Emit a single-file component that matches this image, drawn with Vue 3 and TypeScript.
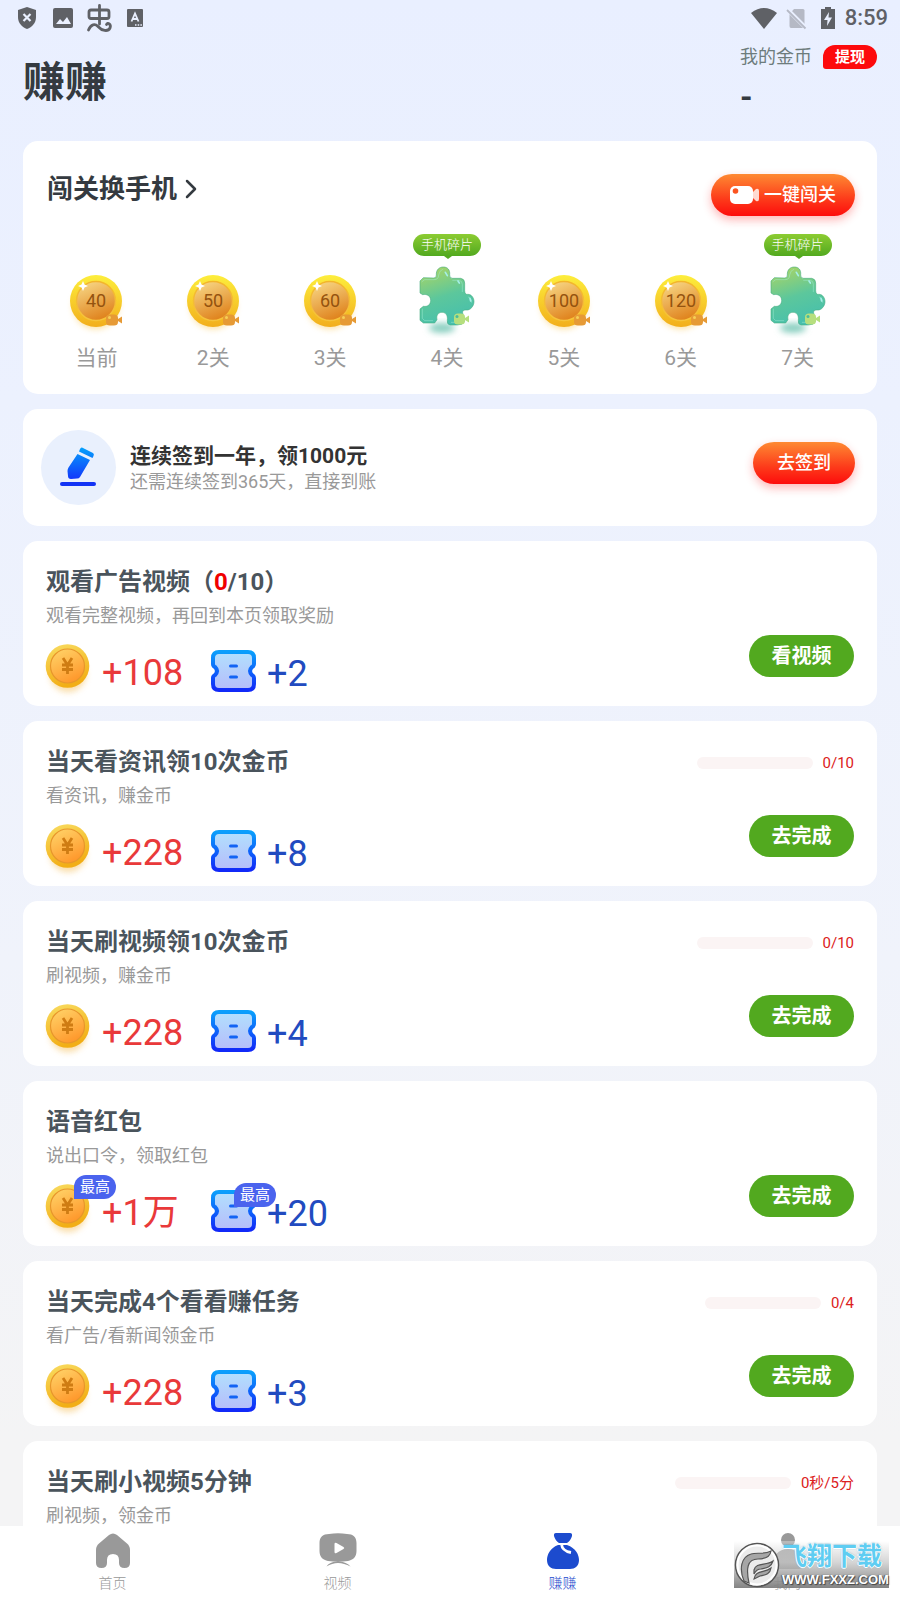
<script setup lang="ts">
interface Step {
  label: string
  coins?: number
}

interface Reward {
  kind: 'coin' | 'ticket'
  amount: string
  capped?: boolean
}

interface Task {
  title: string
  counter?: { done: string; total: string }
  note: string
  rewards: Reward[]
  progress?: string
  percent?: number
  action?: string
}

interface Tab {
  id: string
  label: string
}

const steps: Step[] = [
  { label: '当前', coins: 40 },
  { label: '2关', coins: 50 },
  { label: '3关', coins: 60 },
  { label: '4关' },
  { label: '5关', coins: 100 },
  { label: '6关', coins: 120 },
  { label: '7关' },
]

const rewards = (coin: string, ticket: string, capped = false): Reward[] => [
  { kind: 'coin', amount: coin, capped },
  { kind: 'ticket', amount: ticket, capped },
]

const tasks: Task[] = [
  { title: '观看广告视频', counter: { done: '0', total: '10' }, note: '观看完整视频，再回到本页领取奖励', rewards: rewards('+108', '+2'), action: '看视频' },
  { title: '当天看资讯领10次金币', note: '看资讯，赚金币', rewards: rewards('+228', '+8'), progress: '0/10', percent: 0, action: '去完成' },
  { title: '当天刷视频领10次金币', note: '刷视频，赚金币', rewards: rewards('+228', '+4'), progress: '0/10', percent: 0, action: '去完成' },
  { title: '语音红包', note: '说出口令，领取红包', rewards: rewards('+1万', '+20', true), action: '去完成' },
  { title: '当天完成4个看看赚任务', note: '看广告/看新闻领金币', rewards: rewards('+228', '+3'), progress: '0/4', percent: 0, action: '去完成' },
  { title: '当天刷小视频5分钟', note: '刷视频，领金币', rewards: [], progress: '0秒/5分', percent: 0 },
]

const tabs: Tab[] = [
  { id: 'home', label: '首页' },
  { id: 'video', label: '视频' },
  { id: 'earn', label: '赚赚' },
  { id: 'mine', label: '我的' },
]
</script>

<template>
  <div class="app">
    <svg class="defs" width="0" height="0" aria-hidden="true">
      <defs>
        <linearGradient id="rim" x1="0" y1="0" x2="0" y2="1"><stop offset="0" stop-color="#fdee3c" /><stop offset="1" stop-color="#f2ae1c" /></linearGradient>
        <linearGradient id="face" x1="0.2" y1="0" x2="0.6" y2="1"><stop offset="0" stop-color="#f7d786" /><stop offset="1" stop-color="#df811b" /></linearGradient>
        <linearGradient id="edge" x1="0" y1="0" x2="0" y2="1"><stop offset="0" stop-color="#f3b52b" /><stop offset="1" stop-color="#f6c43c" /></linearGradient>
        <linearGradient id="piece" x1="0.3" y1="0" x2="0.6" y2="1"><stop offset="0" stop-color="#a5d468" /><stop offset="0.5" stop-color="#5cc79c" /><stop offset="1" stop-color="#45bfae" /></linearGradient>
        <linearGradient id="pen" x1="0" y1="0" x2="0" y2="1"><stop offset="0" stop-color="#06a1fb" /><stop offset="1" stop-color="#1238fb" /></linearGradient>
        <linearGradient id="goldRim" x1="0" y1="0" x2="0.3" y2="1"><stop offset="0" stop-color="#f9dd62" /><stop offset="1" stop-color="#f2ae15" /></linearGradient>
        <linearGradient id="goldFace" x1="0" y1="0" x2="0.5" y2="1"><stop offset="0" stop-color="#ffd66b" /><stop offset="1" stop-color="#ff9a2e" /></linearGradient>
        <linearGradient id="ticketLine" x1="0" y1="0" x2="0" y2="1"><stop offset="0" stop-color="#0a9ffc" /><stop offset="1" stop-color="#1129f8" /></linearGradient>
        <linearGradient id="ticketFill" x1="0" y1="0" x2="0" y2="1"><stop offset="0" stop-color="#b1e0fe" /><stop offset="1" stop-color="#b6bcfa" /></linearGradient>
        <filter id="soft" x="-50%" y="-50%" width="200%" height="200%"><feGaussianBlur stdDeviation="3" /></filter>
      </defs>
    </svg>

    <div class="status">
      <div class="status-side">
        <svg width="20" height="22" viewBox="0 0 20 22"><path d="M10 0 19 3V10C19 16 15 20 10 22 5 20 1 16 1 10V3Z" fill="#5f6166" /><path d="m6.500 7 7 7m0-7-7 7" stroke="#eaf0ff" stroke-width="2.200" /></svg>
        <svg width="20" height="20" viewBox="0 0 20 20"><rect width="20" height="20" rx="2" fill="#5f6166" /><path d="m3 16 4-5 3 3 4-5 4 7Z" fill="#eaf0ff" /></svg>
        <svg class="status-bug" width="26" height="28" viewBox="0 0 26 28" fill="none" stroke="#5f6166" stroke-width="2.800" stroke-linecap="round"><path d="M12.500 1.500V20M4 6H20Q22 6 22 8V12.500Q22 14.500 20 14.500H4Q2 14.500 2 12.500V8Q2 6 4 6ZM1.500 26C4 20 8 19.500 11 22.500 15 27 21 28 23 24 24.500 20 20.500 18 19.500 20.500" /></svg>
        <svg width="16" height="18" viewBox="0 0 16 18"><rect width="16" height="18" rx="1" fill="#5f6166" /><path d="M4.500 12.500 8 4.500 11.500 12.500M6 10H10" fill="none" stroke="#eaf0ff" stroke-width="1.800" /><path d="M8 16H15" stroke="#eaf0ff" stroke-width="1.500" stroke-dasharray="1.500 1.200" /></svg>
      </div>
      <div class="status-side status-right">
        <svg width="26" height="21" viewBox="0 0 26 21"><path d="M0 5Q13-5 26 5L13 21Z" fill="#5f6166" /></svg>
        <svg class="status-sim" width="20" height="21" viewBox="0 0 20 21"><path d="M7 1H16Q17.500 1 17.500 2.500V20H4Q2.500 20 2.500 18V6Z" fill="#b5b9c5" /><path d="m0 1 19 19" stroke="#eaf0ff" stroke-width="4" /><path d="m0 2 18.500 18.500" stroke="#b5b9c5" stroke-width="1.800" /></svg>
        <svg width="14" height="22" viewBox="0 0 14 22"><path d="M4 0H10V2H14V22H0V2H4Z" fill="#5f6166" /><path d="M8 5 3 13H6.500L6 19 11 10.500H7.500Z" fill="#eaf0ff" /></svg>
        <span class="clock">8:59</span>
      </div>
    </div>

    <main class="scroll">
      <header class="top">
        <h1>赚赚</h1>
        <div class="wallet">
          <div class="wallet-row">
            <span class="wallet-label">我的金币</span>
            <button type="button" class="withdraw">提现</button>
          </div>
          <strong class="balance">-</strong>
        </div>
      </header>

      <section class="card stages">
        <div class="stages-head">
          <a href="#stages" class="stages-title">
            闯关换手机
            <svg width="12" height="20" viewBox="0 0 12 20"><path d="m2 2 8 8-8 8" fill="none" stroke="#343a40" stroke-width="2.500" stroke-linecap="round" stroke-linejoin="round" /></svg>
          </a>
          <button type="button" class="hot">
            <svg width="30" height="18" viewBox="0 0 30 18"><rect width="23" height="18" rx="5" fill="#fff" /><circle cx="5.500" cy="5" r="2.800" fill="#fb5420" /><path d="M23 6 26 3Q29 2 29 5V13Q29 16 26 15L23 12Z" fill="#fff" opacity=".8" /></svg>
            一键闯关
          </button>
        </div>
        <ol class="steps">
          <li v-for="step in steps" :key="step.label" class="step">
            <div class="tag-slot"><span v-if="!step.coins" class="tag">手机碎片</span></div>
            <svg v-if="step.coins" width="60" height="70" viewBox="-3 -1 60 70">
              <circle cx="27" cy="38" r="23" fill="#fbd57c" opacity=".7" filter="url(#soft)" />
              <circle cx="27" cy="33" r="26" fill="url(#rim)" />
              <circle cx="27" cy="33" r="19.500" fill="url(#face)" stroke="url(#edge)" stroke-width="1.500" />
              <path d="m14 13 1.500 3.500L19 18l-3.500 1.500L14 23l-1.500-3.500L9 18l3.500-1.500Z" fill="#fff" />
              <path d="M37 50Q37 46.500 41 46.500H45Q49 46.500 49 50V51L53 48.500V55.500L49 53V54Q49 57.500 45 57.500H41Q37 57.500 37 54Z" fill="#e69a35" />
              <circle cx="40.500" cy="49.500" r="1.500" fill="#f6cf56" />
              <text x="27" y="39" text-anchor="middle" class="coin-value">{{ step.coins }}</text>
            </svg>
            <svg v-else width="60" height="70" viewBox="-3 0 60 70">
              <ellipse cx="22" cy="61" rx="13" ry="5" fill="#89cfc0" filter="url(#soft)" />
              <g transform="scale(.3333)">
                <path d="M0 42 10 32 40 33Q50 34 49 24C48 8 58 0 70 0S91 8 89 24Q88 34 98 34H122Q134 36 134 48V70Q134 84 144 82C154 82 162 92 162 104S152 131 138 129Q124 128 129 142L133 164Q128 174 112 174H90Q80 172 82 160C84 144 76 136 66 136S48 144 51 158L44 168H10L0 160V126L10 118C24 120 32 112 32 100S22 80 8 83L0 78Z" fill="url(#piece)" stroke="#46ad82" stroke-opacity=".6" stroke-width="3" />
                <path d="M6 44 14 38H42Q56 38 56 24 58 10 68 7M98 40H118Q127 42 127 52V74M145 90Q156 94 155 106M7 126V154L14 161H38M94 166H112" fill="none" stroke="#9eebd0" stroke-width="3" stroke-linecap="round" opacity=".5" />
                <path d="m76 16 6 10m36 22-4-6m36 52 2 8" stroke="#a4efe8" stroke-width="5" stroke-linecap="round" />
              </g>
              <path d="M34 50Q34 46.500 38 46.500H41Q45 46.500 45 50V51L49 48.500V55.500L45 53V54Q45 57.500 41 57.500H38Q34 57.500 34 54Z" fill="#b6df7e" />
              <circle cx="37" cy="49.500" r="1.500" fill="#48bba0" />
            </svg>
            <span class="step-label">{{ step.label }}</span>
          </li>
        </ol>
      </section>

      <section class="card signin">
        <div class="signin-icon">
          <svg width="38" height="42" viewBox="1 0 38 42"><path d="M23 .500 34 6Q35.500 7 34.500 9L33.500 11 20 4.500 21 2Q22 0 23 .500ZM18.500 7 31 13 21 30Q20 31.500 18 31.500L12 32Q9 32 9 29L8.500 24Q8.500 22 9.500 20.500Z" fill="url(#pen)" /><rect x="1" y="35" width="36" height="4" rx="2" fill="#1233f5" /></svg>
        </div>
        <div class="signin-text">
          <h2>连续签到一年，领1000元</h2>
          <p>还需连续签到365天，直接到账</p>
        </div>
        <button type="button" class="hot">去签到</button>
      </section>

      <section v-for="task in tasks" :key="task.title" class="card task">
        <div class="task-main">
          <h2>{{ task.title }}<template v-if="task.counter">（<em>{{ task.counter.done }}</em>/{{ task.counter.total }}）</template></h2>
          <p>{{ task.note }}</p>
          <div v-if="task.rewards.length" class="rewards">
            <div v-for="reward in task.rewards" :key="reward.kind" class="reward" :class="reward.kind">
              <div class="reward-icon">
                <svg v-if="reward.kind === 'coin'" width="44" height="56" viewBox="0 0 44 56">
                  <circle cx="22" cy="30" r="18" fill="#f8cf83" opacity=".7" filter="url(#soft)" />
                  <circle cx="21.500" cy="22" r="21.800" fill="url(#goldRim)" />
                  <circle cx="21.500" cy="22" r="17" fill="url(#goldFace)" stroke="#e8962c" stroke-width="1.200" />
                  <path d="m17 14 4.500 7 4.500-7M21.500 21V30M16 21H27M16 25.500H27" fill="none" stroke="#cf7c13" stroke-width="2.800" />
                </svg>
                <svg v-else width="45" height="42" viewBox="0 0 45 42">
                  <path d="M8 2H37Q43 2 43 8V14Q43 16 41 17 37 21 41 25 43 26 43 28V34Q43 40 37 40H8Q2 40 2 34V28Q2 26 4 25 8 21 4 17 2 16 2 14V8Q2 2 8 2Z" fill="url(#ticketFill)" stroke="url(#ticketLine)" stroke-width="4" />
                  <path d="M19.500 16H25.500M19.500 27H25.500" stroke="#1263f4" stroke-width="3" stroke-linecap="round" />
                </svg>
                <span v-if="reward.capped" class="cap">最高</span>
              </div>
              <span class="amount">{{ reward.amount }}</span>
            </div>
          </div>
        </div>
        <div class="task-side">
          <div v-if="task.progress" class="progress">
            <span class="bar"><span class="bar-fill" :style="{ width: task.percent + '%' }"></span></span>
            <span class="progress-text">{{ task.progress }}</span>
          </div>
          <button v-if="task.action" type="button" class="go">{{ task.action }}</button>
        </div>
      </section>
    </main>

    <nav class="tabs">
      <a v-for="tab in tabs" :key="tab.id" :href="'#' + tab.id" class="tab" :class="{ active: tab.id === 'earn' }">
        <svg width="38" height="36" viewBox="0 0 38 36" fill="currentColor">
          <path v-if="tab.id === 'home'" d="M15 2Q19-1 23 2L33 10.500Q36 13 36 17V30Q36 35 30.500 35T25 30V27Q25 21 19 21T13 27V30Q13 35 7.500 35T2 30V17Q2 13 5 10.500Z" />
          <template v-else-if="tab.id === 'video'">
            <path d="M10 1Q19-.500 28 1C34 1 37.500 4 37.500 10V18C37.500 24 34 27 29 28Q19 29 9 28C4 27 .500 24 .500 18V10C.500 4 4 1 10 1Z" />
            <path d="M7.500 33.500Q10 29 19 28 28 29 31.500 33.500 25 30 19 30T7.500 33.500Z" />
            <path d="M15.500 11Q15.500 9 17.500 10L24.500 14Q26 15 24.500 16L17.500 20Q15.500 21 15.500 19Z" fill="#fff" />
          </template>
          <template v-else-if="tab.id === 'earn'">
            <path d="M12 0H26Q28.500 0 28 3 26.500 8 23 10H15Q11.500 8 10 3 9.500 0 12 0ZM14 12H23C32 15 35 22 35 27 35 33 31 36 26 36H12C7 36 3 33 3 27 3 22 6 15 14 12Z" />
            <path d="M17.500 11Q18 18 27 19.500" fill="none" stroke="#fff" stroke-width="2.800" />
          </template>
          <template v-else>
            <circle cx="19" cy="7" r="7" />
            <path d="M19 16C29 16 34 23 34 31Q34 36 29 36H9Q4 36 4 31C4 23 9 16 19 16Z" />
          </template>
        </svg>
        <span>{{ tab.label }}</span>
      </a>
    </nav>

    <div class="stamp">
      <svg width="46" height="46" viewBox="0 0 46 46">
        <circle cx="23" cy="23" r="21.500" fill="#ececec" stroke="#555" stroke-width="1.500" />
        <circle cx="23" cy="23" r="19.500" fill="none" stroke="#fff" stroke-width="2" />
        <path d="M10 39C5 27 7 15 17 12 23 10 30 13 37 9 36 16 30 17 24 17 13 17 12 27 15 41ZM20 28C22 20 32 24 39 19 37 26 31 26 27 27 23 27 21 30 20 32ZM20 37C21 28 31 31 37 26 36 33 30 33 26 34Z" fill="#a6a6a6" stroke="#555" stroke-width="1.200" />
      </svg>
      <div class="stamp-text">
        <span class="stamp-name">飞翔下载</span>
        <span class="stamp-url">WWW.FXXZ.COM</span>
      </div>
    </div>
  </div>
</template>

<style>
body {
  margin: 0;
}
</style>

<style scoped>
.app {
  position: relative;
  display: flex;
  flex-direction: column;
  height: 100vh;
  overflow: hidden;
  background: linear-gradient(#e9efff 0%, #ecf1fe 25%, #f0f3fb 60%, #f4f4f5 90%);
  font-family: Roboto, "Noto Sans CJK SC", sans-serif;
  color: #343a40;
}
.app * {
  box-sizing: border-box;
}
.defs {
  position: absolute;
}
svg {
  display: block;
  flex: none;
  overflow: visible;
}
h1,
h2,
p,
ol {
  margin: 0;
  padding: 0;
}
button {
  border: 0;
  padding: 0;
  font-family: inherit;
  color: #fff;
  cursor: pointer;
}
a {
  color: inherit;
  text-decoration: none;
}

.status {
  display: flex;
  justify-content: space-between;
  flex: none;
  height: 36px;
  padding: 0 12px 0 17px;
}
.status-side {
  display: flex;
  align-items: center;
  gap: 16px;
}
.status-bug {
  margin-right: -2px;
  margin-left: -2px;
}
.status-right {
  gap: 10px;
}
.status-sim {
  margin-right: 4px;
}
.clock {
  color: #5f6166;
  font-size: 22px;
  font-weight: 500;
  line-height: 38px;
}

.scroll {
  flex: 1;
  min-height: 0;
  display: flex;
  flex-direction: column;
  gap: 15px;
  padding: 0 23px;
  overflow-y: auto;
  scrollbar-width: none;
}
.top {
  display: flex;
  flex: none;
  justify-content: space-between;
  height: 90px;
}
h1 {
  padding-top: 17px;
  font-size: 42px;
  font-weight: 700;
  line-height: 60px;
}
.wallet {
  padding-top: 8px;
}
.wallet-row {
  display: flex;
  align-items: center;
  gap: 11px;
}
.wallet-label {
  color: #6d7c7c;
  font-size: 18px;
  line-height: 26px;
}
.withdraw {
  width: 54px;
  height: 24px;
  border-radius: 12px 12px 12px 3px;
  background: #fd0a0c;
  font-size: 15px;
  font-weight: 700;
  line-height: 24px;
}
.balance {
  display: block;
  font-size: 32px;
  line-height: 54px;
}

.card {
  flex: none;
  border-radius: 15px;
  background: #fff;
}
.stages {
  padding: 33px 21px 21px 15px;
}
.stages-head {
  display: flex;
  justify-content: space-between;
  align-items: flex-start;
  padding: 0 1px 0 9px;
}
.stages-title {
  display: flex;
  align-items: center;
  gap: 8px;
  font-size: 26px;
  font-weight: 700;
  line-height: 30px;
}
.hot {
  display: flex;
  align-items: center;
  gap: 4px;
  height: 42px;
  padding: 0 19px;
  border-radius: 21px;
  background: linear-gradient(#fe8a32, #fd3a1a 60%, #fd0c0c);
  box-shadow: 0 4px 10px rgba(253, 20, 20, 0.3);
  font-size: 18px;
  font-weight: 500;
  line-height: 42px;
}
.steps {
  display: grid;
  grid-template-columns: repeat(7, 1fr);
  margin-top: 18px;
  list-style: none;
}
.step {
  display: flex;
  flex-direction: column;
  align-items: center;
}
.tag-slot {
  height: 33px;
}
.tag {
  position: relative;
  display: block;
  height: 22px;
  padding: 0 8px;
  border-radius: 11px;
  background: linear-gradient(#8ccc32, #52a91f);
  color: #fff;
  font-size: 13px;
  font-weight: 300;
  line-height: 22px;
}
.tag::after {
  content: "";
  position: absolute;
  top: 22px;
  left: 50%;
  margin-left: -3px;
  border: 4px solid transparent;
  border-top: 3px solid #52a91f;
  border-bottom: 0;
}
.coin-value {
  fill: #94530f;
  font-size: 18px;
}
.step-label {
  margin-top: 6px;
  color: #999;
  font-size: 21px;
  line-height: 30px;
}

.signin {
  display: flex;
  align-items: center;
  height: 117px;
  padding: 0 22px 0 18px;
}
.signin-icon {
  display: grid;
  place-items: center;
  width: 75px;
  height: 75px;
  border-radius: 50%;
  background: #e9f0fd;
}
.signin-text {
  flex: 1;
  padding-top: 3px;
  padding-left: 14px;
}
.signin-text h2 {
  color: #333;
  font-size: 21px;
  font-weight: 700;
  line-height: 26px;
}
.signin .hot {
  padding: 0 24px;
  margin-bottom: 9px;
}
.signin-text p,
.task p {
  color: #999;
  font-size: 18px;
  line-height: 26px;
}

.task {
  display: flex;
  justify-content: space-between;
  height: 165px;
  padding: 0 23px;
}
.task-main {
  padding-top: 25px;
}
.task h2 {
  color: #4a545c;
  font-size: 24px;
  font-weight: 700;
  line-height: 32px;
}
.task em {
  color: #f00000;
  font-style: normal;
}
.task p {
  margin-top: 5px;
}
.rewards {
  display: flex;
  align-items: flex-start;
  margin-top: 15px;
}
.reward {
  display: flex;
  gap: 11px;
}
.reward-icon {
  position: relative;
  height: 46px;
}
.ticket .reward-icon {
  margin-top: 6px;
}
.amount {
  font-size: 36px;
  line-height: 58px;
}
.coin .amount {
  color: #e9393a;
}
.ticket .amount {
  color: #214bc0;
  line-height: 60px;
}
.coin {
  gap: 12px;
  min-width: 165px;
}
.cap {
  position: absolute;
  top: -9px;
  left: 28px;
  width: 42px;
  height: 24px;
  border-radius: 12px 12px 12px 0;
  background: #4a63ee;
  color: #fff;
  font-size: 15px;
  line-height: 24px;
  text-align: center;
}
.ticket .cap {
  top: -7px;
  left: 23px;
}
.task-side {
  display: flex;
  flex-direction: column;
  align-items: flex-end;
  justify-content: space-between;
  padding: 32px 0 29px;
}
.progress {
  display: flex;
  align-items: center;
  gap: 10px;
}
.bar {
  width: 116px;
  height: 12px;
  border-radius: 6px;
  background: #fbf4f4;
  overflow: hidden;
}
.bar-fill {
  display: block;
  height: 100%;
  background: #e02a2a;
}
.progress-text {
  color: #dc2020;
  font-size: 15px;
  line-height: 20px;
}
.go {
  min-width: 105px;
  height: 42px;
  margin-top: auto;
  padding: 0 22px;
  border-radius: 21px;
  background: #52a91f;
  font-size: 20px;
  font-weight: 700;
  line-height: 42px;
}

.tabs {
  display: flex;
  flex: none;
  height: 74px;
  background: #fff;
}
.tab {
  display: flex;
  flex: 1;
  flex-direction: column;
  align-items: center;
  padding-top: 7px;
  color: #999;
  font-size: 14px;
  line-height: 20px;
}
.tab span {
  margin-top: 4px;
  font-weight: 300;
}
.tab.active {
  color: #1c4bce;
}

.stamp {
  position: absolute;
  right: 11px;
  bottom: 12px;
  display: flex;
  align-items: center;
  width: 155px;
  height: 47px;
  background: linear-gradient(rgba(255, 255, 255, 0.3), rgba(200, 200, 200, 0.75) 45%, rgba(125, 125, 125, 0.95));
}
.stamp-text {
  display: flex;
  flex-direction: column;
  padding-left: 2px;
}
.stamp-name {
  color: #5fcdf2;
  font-size: 25px;
  font-weight: 700;
  line-height: 30px;
  text-shadow: 0 1px 0 #fff, 1px 0 0 #fff, -1px 0 0 #fff, 0 0 2px #2a8fb8;
}
.stamp-url {
  color: #fff;
  font-family: "Liberation Sans", sans-serif;
  font-size: 13px;
  font-weight: 700;
  line-height: 16px;
  text-shadow: 1px 1px 1px #444, -1px 0 1px #555;
}
</style>
